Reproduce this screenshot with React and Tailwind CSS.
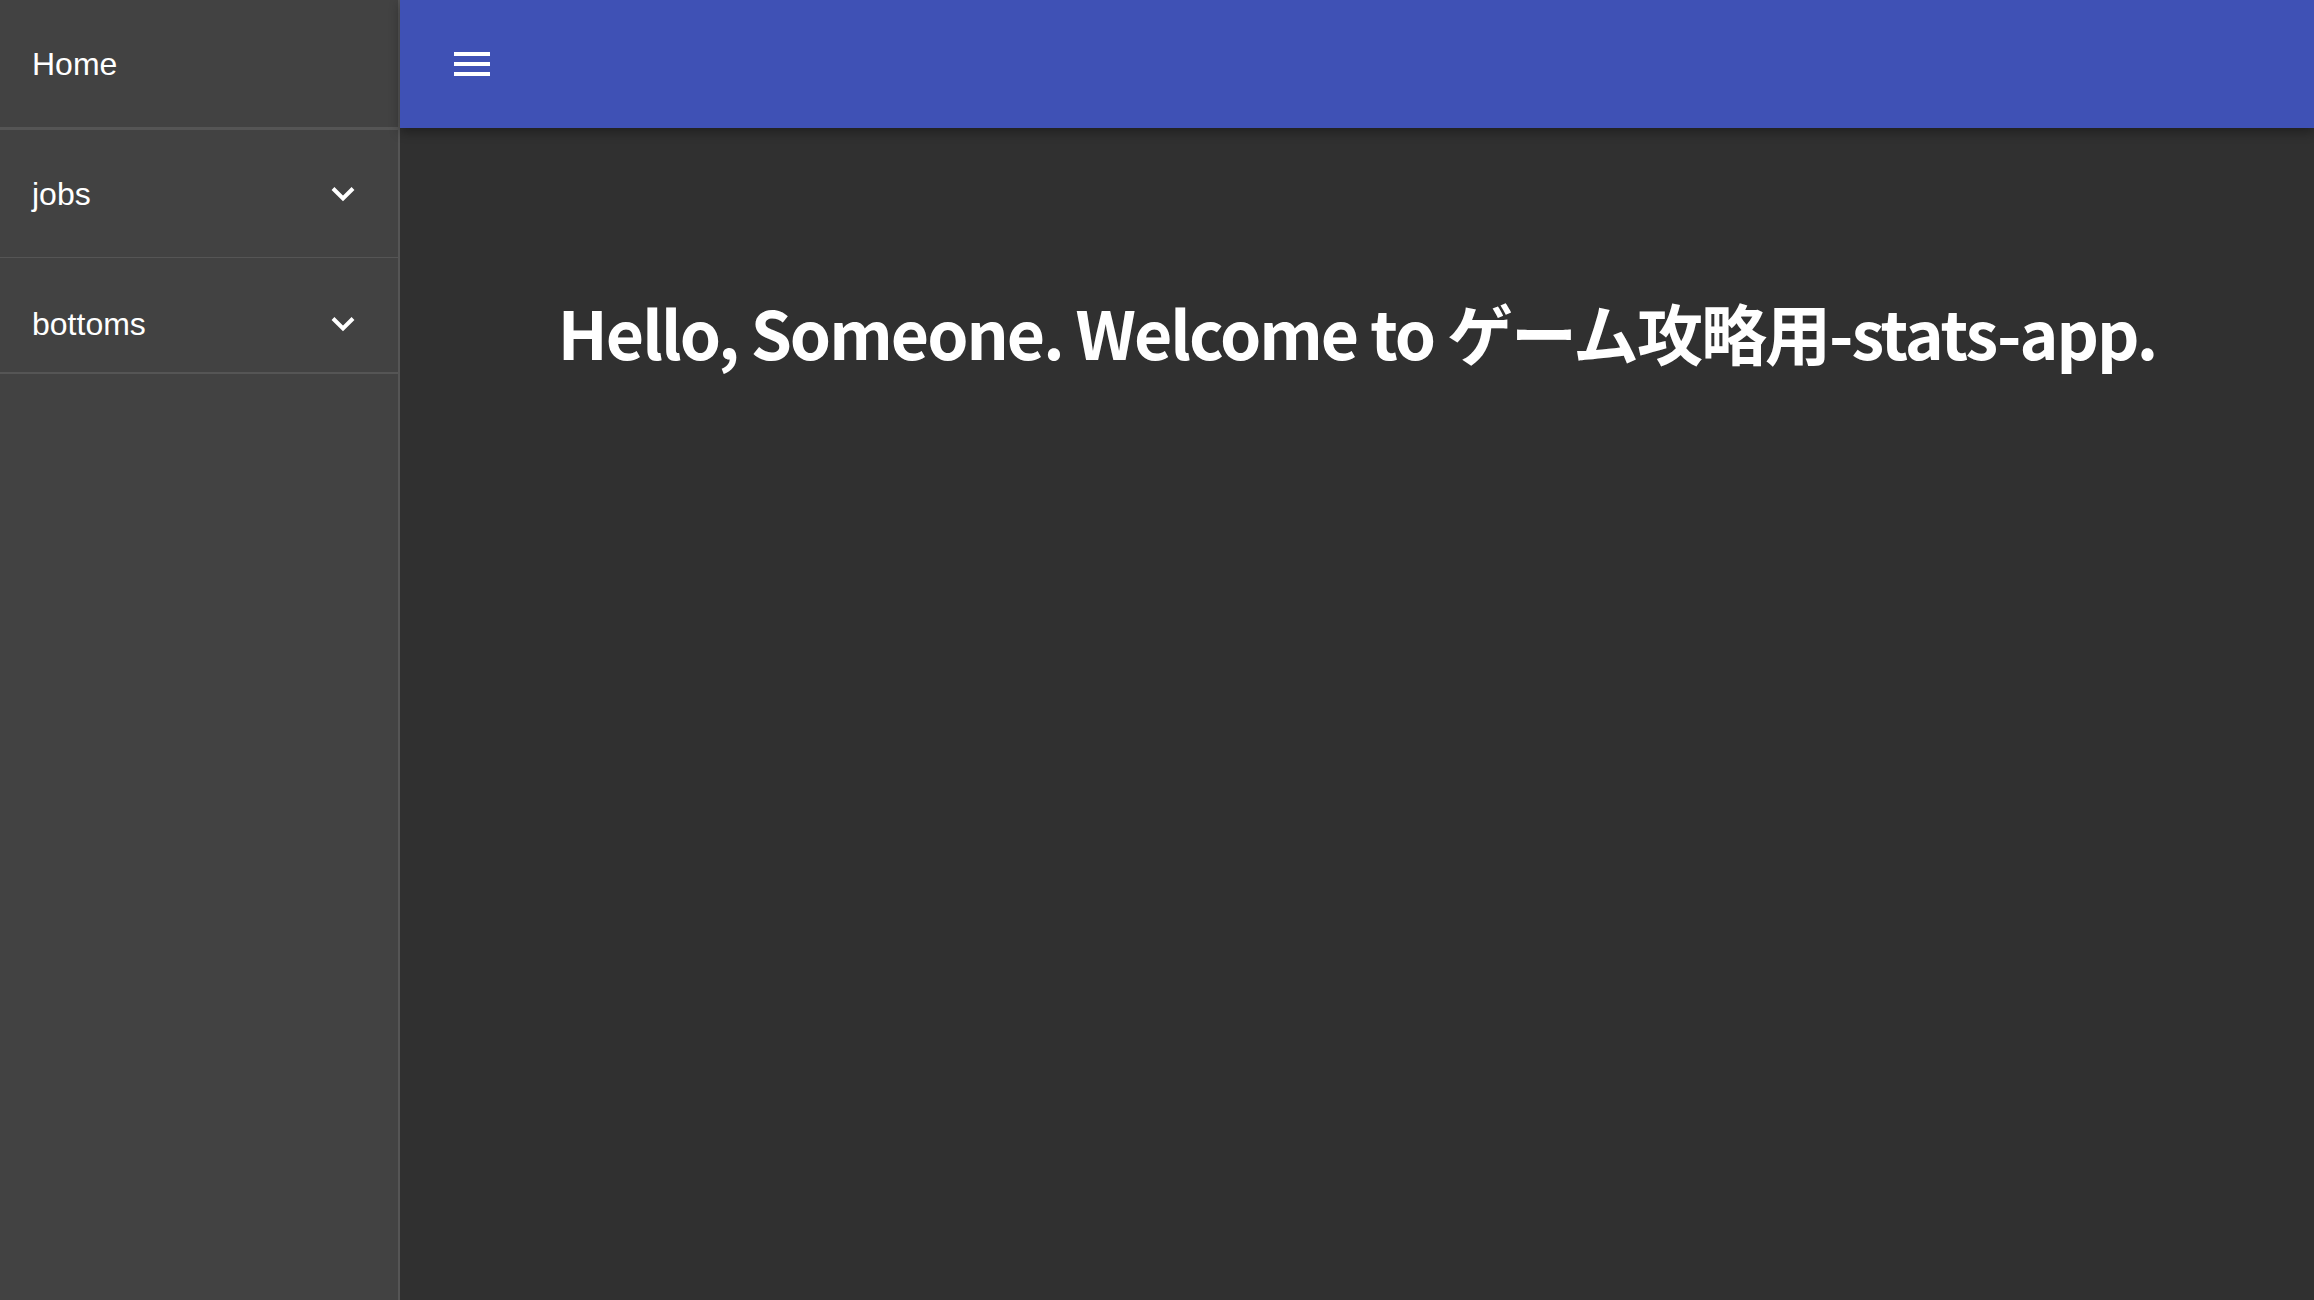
const Chevron = () => (
  <svg width="24" height="16" viewBox="0 0 24 16" fill="none" className="shrink-0">
    <path d="M2 2.5 L12 12.5 L22 2.5" stroke="white" strokeWidth="4" />
  </svg>
)

const navItems = [
  { label: 'jobs', rowClass: 'h-[128px] border-b border-[#555555]' },
  { label: 'bottoms', rowClass: 'h-[116px] pt-[18px] border-b-2 border-[#555555]' },
]

export default function App() {
  return (
    <div className="flex h-[1300px] w-full overflow-hidden bg-[#303030] font-['Liberation_Sans',Arial,sans-serif] text-white">
      <aside className="flex w-[400px] shrink-0 flex-col border-r-2 border-[#555555] bg-[#424242]">
        <div className="flex h-[130px] items-center border-b-[3px] border-[#555555] pl-8 text-[32px]">
          Home
        </div>
        {navItems.map((item) => (
          <div key={item.label} className={`flex items-center justify-between pl-8 pr-[43px] text-[32px] ${item.rowClass}`}>
            <span>{item.label}</span>
            <Chevron />
          </div>
        ))}
      </aside>

      <div className="flex min-w-0 flex-1 flex-col">
        <header className="relative z-10 flex h-[128px] shrink-0 items-center bg-[#3f51b5] pl-[54px] shadow-[0_4px_10px_rgba(0,0,0,0.35)]">
          <div className="flex w-9 flex-col gap-[6px]">
            <span className="block h-1 w-9 bg-white" />
            <span className="block h-1 w-9 bg-white" />
            <span className="block h-1 w-9 bg-white" />
          </div>
        </header>
        <main className="flex-1 pt-[163px]">
          <h1 className="text-center font-['Noto_Sans_CJK_JP',sans-serif] text-[66px] leading-[1.235] font-bold tracking-[-2px]">
            Hello, Someone. Welcome to ゲーム攻略用-stats-app.
          </h1>
        </main>
      </div>
    </div>
  )
}
